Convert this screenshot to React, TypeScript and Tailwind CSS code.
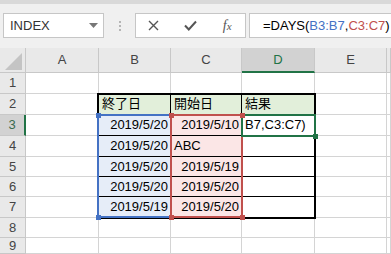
import React from "react";

const cols = [26, 73, 72, 71, 73, 72, 4];
const rowH = [21, 21, 21, 21, 20, 20, 21, 20, 16];
const letters = ["A", "B", "C", "D", "E", ""];

type CellDef = { text?: string; align?: "l" | "r"; cls?: string };

const bDates = ["2019/5/20", "2019/5/20", "2019/5/20", "2019/5/20", "2019/5/19"];
const cVals: CellDef[] = [
  { text: "2019/5/10", align: "r" },
  { text: "ABC", align: "l" },
  { text: "2019/5/19", align: "r" },
  { text: "2019/5/20", align: "r" },
  { text: "2019/5/20", align: "r" },
];

function cellsFor(r: number): CellDef[] {
  const out: CellDef[] = [];
  for (let c = 0; c < 6; c++) out.push({});
  if (r === 2) {
    out[1] = { text: "終了日", align: "l", cls: "bg-[#e2efda] border-r-black border-b-black" };
    out[2] = { text: "開始日", align: "l", cls: "bg-[#e2efda] border-r-black border-b-black" };
    out[3] = { text: "結果", align: "l", cls: "bg-[#e2efda] border-r-black border-b-black" };
  }
  if (r >= 3 && r <= 7) {
    const i = r - 3;
    const bb = r < 7 ? "border-b-black" : "";
    out[1] = { text: bDates[i], align: "r", cls: `bg-[#e6edf8] border-r-black ${bb}` };
    out[2] = { ...cVals[i], cls: `bg-[#fbe6e6] border-r-black ${bb}` };
    out[3] = {
      text: r === 3 ? "B7,C3:C7)" : undefined,
      align: "l",
      cls: `bg-white border-r-black ${bb}`,
    };
  }
  return out;
}

function Cell({ w, h, def }: { w: number; h: number; def: CellDef }) {
  return (
    <div
      className={`shrink-0 flex items-center overflow-hidden whitespace-nowrap border-r border-b border-[#d4d4d4] text-[13px] text-black ${
        def.align === "r" ? "justify-end pr-[2px]" : "justify-start pl-[3px]"
      } ${def.cls ?? ""}`}
      style={{ width: w, height: h }}
    >
      {def.text}
    </div>
  );
}

function Square({ x, y, color }: { x: number; y: number; color: string }) {
  return (
    <div
      className={`absolute w-[5px] h-[5px] ${color}`}
      style={{ left: x - 2, top: y - 2 }}
    />
  );
}

export default function App() {
  return (
    <div
      className="w-[391px] h-[254px] overflow-hidden bg-white"
      style={{ fontFamily: '"Liberation Sans", "Noto Sans CJK JP", sans-serif' }}
    >
      <div className="h-[4px] bg-[#d9d9d9]" />
      <div className="h-[44px] bg-[#f0f0f0] flex items-start pt-[9px]">
        <div className="ml-[3px] w-[101px] h-[25px] bg-white border border-[#c6c6c6] flex items-center justify-between pl-[6px] pr-[5px] text-[13px] text-[#333]">
          <span>INDEX</span>
          <svg width="9" height="5" viewBox="0 0 9 5">
            <path d="M0 0 L9 0 L4.5 5 Z" fill="#777" />
          </svg>
        </div>
        <div className="w-[31px] h-[25px] flex flex-col items-center justify-center gap-[2px]">
          <div className="w-[2px] h-[2px] bg-[#b5b5b5]" />
          <div className="w-[2px] h-[2px] bg-[#b5b5b5]" />
          <div className="w-[2px] h-[2px] bg-[#b5b5b5]" />
        </div>
        <div className="w-[111px] h-[25px] bg-white border border-[#c6c6c6] flex items-center">
          <div className="w-[36px] flex justify-center">
            <svg width="11" height="11" viewBox="0 0 11 11">
              <path d="M1 1 L10 10 M10 1 L1 10" stroke="#555" strokeWidth="1.4" />
            </svg>
          </div>
          <div className="w-[38px] flex justify-center">
            <svg width="13" height="11" viewBox="0 0 13 11">
              <path d="M1 5.5 L4.8 9.5 L12 1.5" stroke="#555" strokeWidth="2" fill="none" />
            </svg>
          </div>
          <div
            className="w-[36px] flex justify-center text-[14px] italic text-[#555]"
            style={{ fontFamily: '"Liberation Serif", serif' }}
          >
            <span>
              f<span className="text-[11px]">x</span>
            </span>
          </div>
        </div>
        <div className="ml-[3px] flex-1 h-[25px] bg-white border border-[#c6c6c6] border-r-0 flex items-center pl-[13px] text-[13px] text-black whitespace-nowrap overflow-hidden">
          <span>=DAYS(</span>
          <span className="text-[#4472c4]">B3:B7</span>
          <span>,</span>
          <span className="text-[#c0504d]">C3:C7</span>
          <span>)</span>
        </div>
      </div>

      <div className="relative">
        <div className="flex">
          <div
            className="shrink-0 h-[25px] bg-[#e9e9e9] border-r border-b border-[#c8c8c8] flex items-end justify-end pr-[3px] pb-[2px]"
            style={{ width: cols[0] }}
          >
            <svg width="17" height="17" viewBox="0 0 17 17">
              <path d="M17 0 L17 17 L0 17 Z" fill="#c4c4c4" />
            </svg>
          </div>
          {letters.map((l, i) => {
            const sel = l === "D";
            return (
              <div
                key={i}
                className={`shrink-0 h-[25px] flex items-center justify-center text-[13px] border-r border-[#c8c8c8] ${
                  sel
                    ? "bg-[#d2d2d2] text-[#217346] border-b-2 border-b-[#217346]"
                    : "bg-[#e9e9e9] text-[#444] border-b border-b-[#c8c8c8]"
                }`}
                style={{ width: cols[i + 1] }}
              >
                {l}
              </div>
            );
          })}
        </div>
        {rowH.map((h, ri) => {
          const r = ri + 1;
          const sel = r === 3;
          const defs = cellsFor(r);
          return (
            <div key={r} className="flex">
              <div
                className={`shrink-0 flex items-center justify-center text-[13px] border-b border-[#c8c8c8] ${
                  sel
                    ? "bg-[#d2d2d2] text-[#3a6b4e] border-r-2 border-r-[#217346]"
                    : "bg-[#e9e9e9] text-[#444] border-r border-r-[#c8c8c8]"
                }`}
                style={{ width: cols[0], height: h }}
              >
                {r}
              </div>
              {defs.map((d, ci) => (
                <Cell key={ci} w={cols[ci + 1]} h={h} def={d} />
              ))}
            </div>
          );
        })}

        <div
          className="absolute border-2 border-black pointer-events-none"
          style={{ left: 97, top: 45, width: 219, height: 126 }}
        />
        <div
          className="absolute border-2 border-[#4472c4] pointer-events-none"
          style={{ left: 97, top: 66, width: 75, height: 104 }}
        />
        <div
          className="absolute border-2 border-[#c0504d] pointer-events-none"
          style={{ left: 170, top: 66, width: 73, height: 104 }}
        />
        <div
          className="absolute border-2 border-[#217346] pointer-events-none"
          style={{ left: 241, top: 66, width: 75, height: 23 }}
        />
        <Square x={98} y={67} color="bg-[#4472c4]" />
        <Square x={98} y={169} color="bg-[#4472c4]" />
        <Square x={171} y={67} color="bg-[#c0504d]" />
        <Square x={171} y={169} color="bg-[#c0504d]" />
        <Square x={242} y={67} color="bg-[#c0504d]" />
        <Square x={242} y={169} color="bg-[#c0504d]" />
        <Square x={315} y={88} color="bg-[#217346]" />
      </div>
    </div>
  );
}
